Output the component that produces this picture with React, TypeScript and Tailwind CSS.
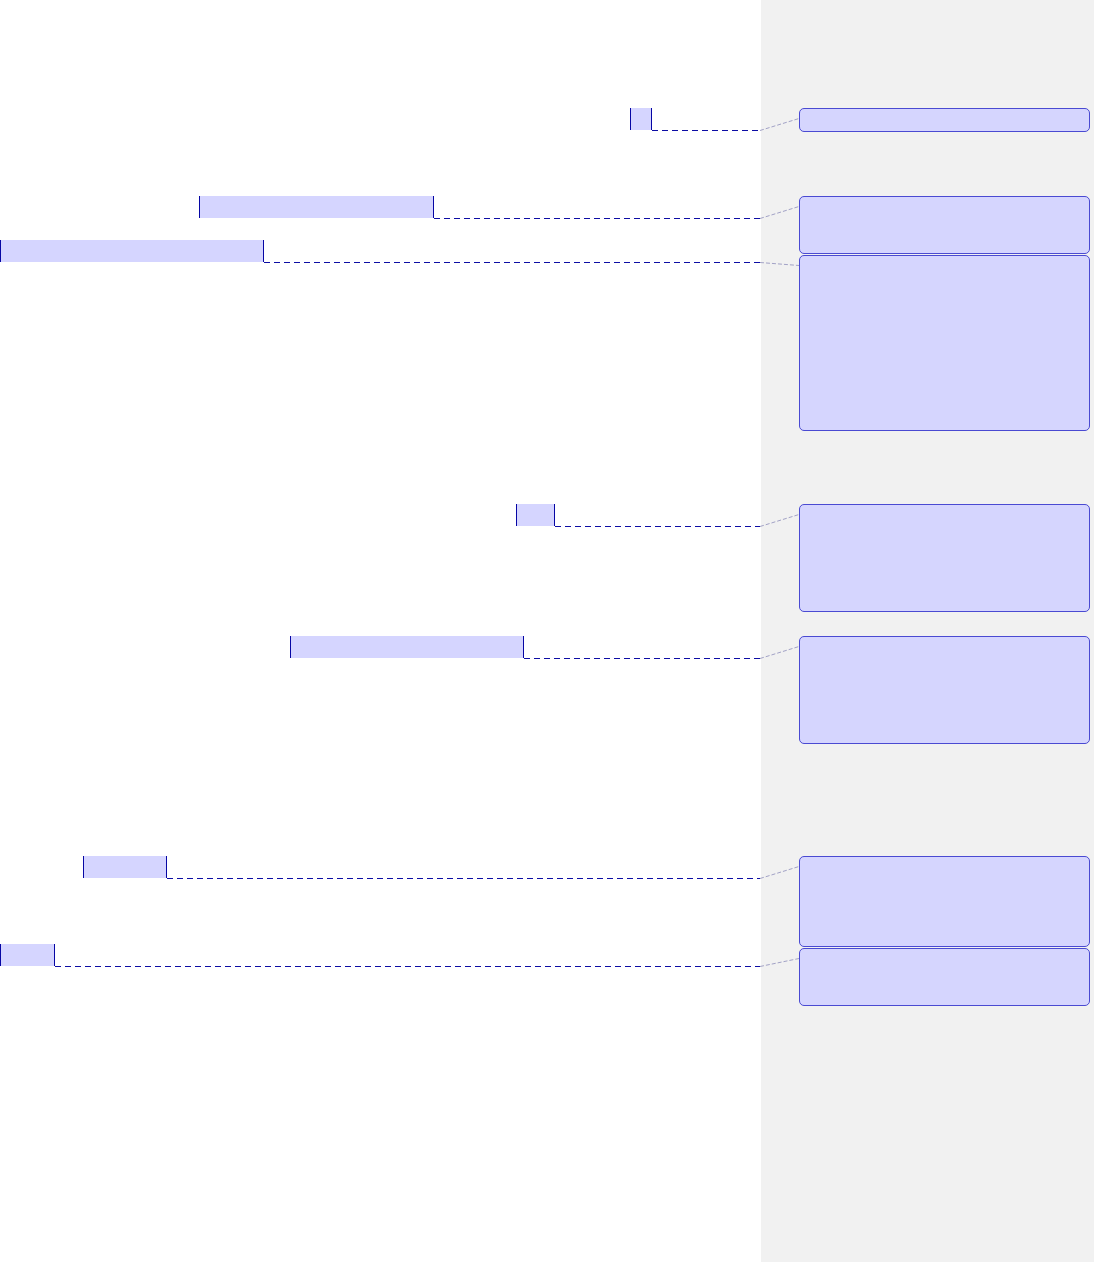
const marks = [
  { row: "mt-[108px]", box: "ml-[630px] w-[22px]", x2: 652, y: 130, top: 108 },
  { row: "mt-[66px]", box: "ml-[199px] w-[235px]", x2: 434, y: 218, top: 196 },
  { row: "mt-[22px]", box: "ml-0 w-[264px]", x2: 264, y: 262, top: 255 },
  { row: "mt-[242px]", box: "ml-[516px] w-[39px]", x2: 555, y: 526, top: 504 },
  { row: "mt-[110px]", box: "ml-[290px] w-[234px]", x2: 524, y: 658, top: 636 },
  { row: "mt-[198px]", box: "ml-[83px] w-[84px]", x2: 167, y: 878, top: 856 },
  { row: "mt-[66px]", box: "ml-0 w-[55px]", x2: 55, y: 966, top: 948 },
];

const balloons = [
  "mt-[108px] h-[24px]",
  "mt-[64px] h-[58px]",
  "mt-px h-[176px]",
  "mt-[73px] h-[108px]",
  "mt-[24px] h-[108px]",
  "mt-[112px] h-[91px]",
  "mt-px h-[58px]",
];

function Connectors() {
  return (
    <svg
      className="pointer-events-none absolute left-0 top-0"
      width={1094}
      height={1262}
      viewBox="0 0 1094 1262"
    >
      {marks.map((m, i) => (
        <g key={i}>
          <line
            x1={m.x2}
            y1={m.y + 0.5}
            x2={760}
            y2={m.y + 0.5}
            stroke="#0c0ca4"
            strokeWidth={1.2}
            strokeDasharray="6 4"
          />
          <line
            x1={760}
            y1={m.y + 0.5}
            x2={799}
            y2={m.top + 10.5}
            stroke="#a2a2c6"
            strokeWidth={1}
            strokeDasharray="4 2"
          />
        </g>
      ))}
    </svg>
  );
}

export default function App() {
  return (
    <div className="relative flex h-[1262px] w-[1094px] overflow-hidden bg-white font-['Liberation_Sans',sans-serif]">
      <div className="flex w-[761px] flex-col bg-white">
        {marks.map((m, i) => (
          <div key={i} className={`flex ${m.row}`}>
            <span className={`h-[22px] border-x border-[#0606a4] bg-[#d5d5ff] ${m.box}`} />
          </div>
        ))}
      </div>
      <div className="flex flex-1 flex-col bg-[#f1f1f1] pl-[38px] pr-[4px]">
        {balloons.map((b, i) => (
          <div
            key={i}
            className={`w-[291px] rounded-[5px] border-[1.5px] border-[#4a4ad2] bg-[#d5d5fe] ${b}`}
          />
        ))}
      </div>
      <Connectors />
    </div>
  );
}
